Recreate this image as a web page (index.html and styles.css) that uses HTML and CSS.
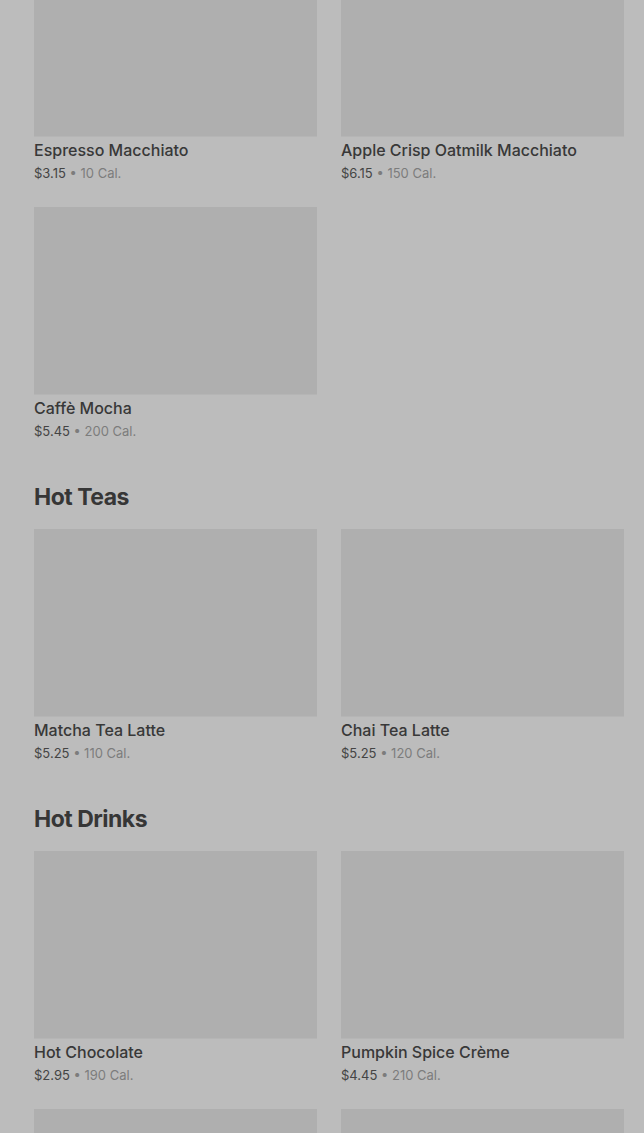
FILE: index.html
```html
<!DOCTYPE html>
<html lang="en">

<head>
    <meta charset="UTF-8">
    <meta name="viewport" content="width=device-width, initial-scale=1.0">
    <title>Menu</title>
    <link rel="stylesheet" href="styles.css">
</head>

<body>
    <div class="page">
        <section class="group first">
            <ul class="grid">
                <li class="item">
                    <div class="pic"></div>
                    <p class="name">Espresso Macchiato</p>
                    <p class="info"><span class="price">$3.15</span> • 10 Cal.</p>
                </li>
                <li class="item">
                    <div class="pic"></div>
                    <p class="name">Apple Crisp Oatmilk Macchiato</p>
                    <p class="info"><span class="price">$6.15</span> • 150 Cal.</p>
                </li>
                <li class="item">
                    <div class="pic"></div>
                    <p class="name">Caffè Mocha</p>
                    <p class="info"><span class="price">$5.45</span> • 200 Cal.</p>
                </li>
            </ul>
        </section>

        <section class="group">
            <h2 class="title">Hot Teas</h2>
            <ul class="grid">
                <li class="item">
                    <div class="pic"></div>
                    <p class="name">Matcha Tea Latte</p>
                    <p class="info"><span class="price">$5.25</span> • 110 Cal.</p>
                </li>
                <li class="item">
                    <div class="pic"></div>
                    <p class="name">Chai Tea Latte</p>
                    <p class="info"><span class="price">$5.25</span> • 120 Cal.</p>
                </li>
            </ul>
        </section>

        <section class="group">
            <h2 class="title">Hot Drinks</h2>
            <ul class="grid">
                <li class="item">
                    <div class="pic"></div>
                    <p class="name">Hot Chocolate</p>
                    <p class="info"><span class="price">$2.95</span> • 190 Cal.</p>
                </li>
                <li class="item">
                    <div class="pic"></div>
                    <p class="name">Pumpkin Spice Crème</p>
                    <p class="info"><span class="price">$4.45</span> • 210 Cal.</p>
                </li>
                <li class="item">
                    <div class="pic"></div>
                </li>
                <li class="item">
                    <div class="pic"></div>
                </li>
            </ul>
        </section>
    </div>
</body>

</html>
```

FILE: styles.css
```css
* {
    margin: 0;
    padding: 0;
    list-style-type: none;
    box-sizing: border-box;
}

body {
    background-color: #bcbcbc;
    font-family: Inter, "Liberation Sans", sans-serif;
    color: #3a3a3a;
    overflow: hidden;
}

.page {
    padding: 0 20px 0 34px;
}

.group {
    margin-top: 43px;
}

.group.first {
    margin-top: -51px;
}

.title {
    font-size: 23px;
    font-weight: 700;
    line-height: 28px;
    letter-spacing: -0.5px;
    color: #363636;
    margin-bottom: 18px;
}

.grid {
    display: grid;
    grid-template-columns: 283px 283px;
    column-gap: 24px;
    row-gap: 25px;
}

.pic {
    height: 188px;
    background-color: #afafaf;
    border-bottom: 1px solid #b5b5b5;
}

.name {
    margin-top: 2px;
    font-size: 16px;
    font-weight: 500;
    line-height: 22px;
    color: #383838;
}

.info {
    margin-top: 3px;
    font-size: 13px;
    line-height: 18px;
    color: #7c7c7c;
}

.price {
    color: #444444;
}
```
